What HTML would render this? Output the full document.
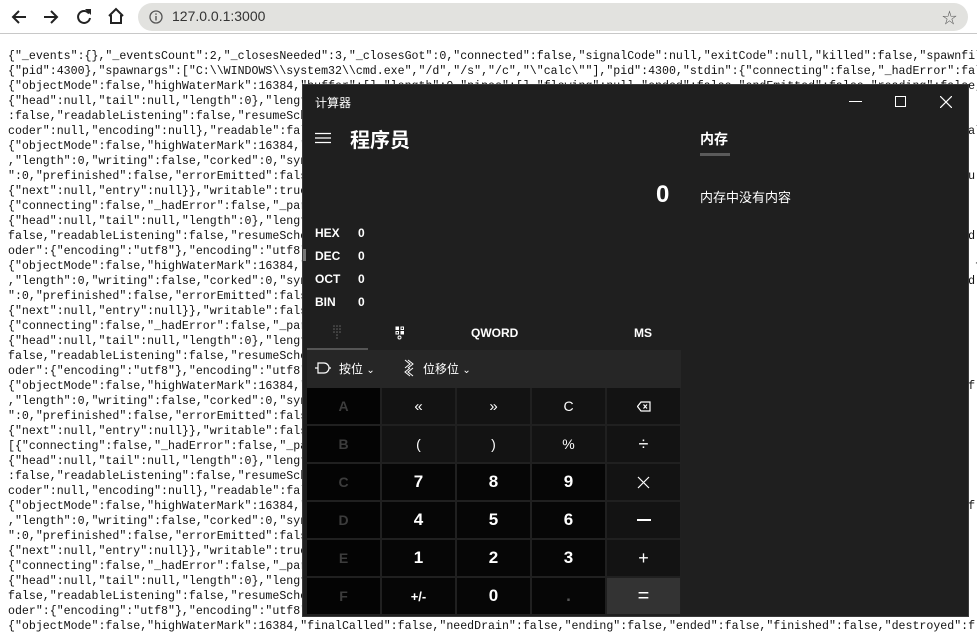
<!DOCTYPE html>
<html><head><meta charset="utf-8"><style>
*{margin:0;padding:0;box-sizing:border-box}
body{width:977px;height:625px;overflow:hidden;background:#fff;position:relative;font-family:"Liberation Sans","Noto Sans CJK SC",sans-serif}
.top{position:absolute;left:0;top:0;width:977px;height:34px;background:#fff;border-bottom:1px solid #c8c8c8}
.url{position:absolute;left:138px;top:3px;width:830px;height:28px;border-radius:14px;background:#e2e2df}
.url span{position:absolute;left:34px;top:5px;font-size:14px;color:#333}
pre{position:absolute;left:8px;top:49px;font-family:"Liberation Mono",monospace;font-size:11.6px;line-height:15px;color:#111;white-space:pre}
.win{position:absolute;left:302px;top:84px;width:667px;height:533px;background:#1f1f1f;border:1px solid #3a3a3a;color:#fff;font-family:"Liberation Sans","Noto Sans CJK SC",sans-serif}
.t{position:absolute;font-size:13px}
.grid{position:absolute;left:4px;top:303px;width:374px;height:227px;background:#202020}
.btn{position:absolute;width:73px;height:36px;display:flex;align-items:center;justify-content:center;font-size:17px;font-weight:bold}
.lt{background:#040404;color:#3c3c3c;font-size:14px}
.nm{background:#060606}
.op{background:#131313;font-weight:normal;font-size:18px}
</style></head><body>
<div class="top">
<svg style="position:absolute;left:10px;top:8px" width="18" height="18"><path d="M16 9H3M9 3L3 9L9 15" fill="none" stroke="#222" stroke-width="2"/></svg>
<svg style="position:absolute;left:42px;top:8px" width="18" height="18"><path d="M2 9H15M9 3L15 9L9 15" fill="none" stroke="#222" stroke-width="2"/></svg>
<svg style="position:absolute;left:75px;top:8px" width="18" height="18"><path d="M14 5.5A6 6 0 1 0 15 10" fill="none" stroke="#222" stroke-width="2"/><path d="M10 1H16V7Z" fill="#222"/></svg>
<svg style="position:absolute;left:107px;top:7px" width="18" height="18" viewBox="0 0 18 18"><path d="M2 9 L9 2 L16 9 M4 8 V16 H14 V8" fill="none" stroke="#222" stroke-width="2"/></svg>
<div class="url"><svg style="position:absolute;left:11px;top:7px" width="14" height="14"><circle cx="7" cy="7" r="6" fill="none" stroke="#555" stroke-width="1.3"/><rect x="6.3" y="6" width="1.4" height="4.5" fill="#555"/><rect x="6.3" y="3.4" width="1.4" height="1.4" fill="#555"/></svg><span>127.0.0.1:3000</span><span style="left:804px;top:4px;font-size:15px;color:#555">&#9734;</span></div>
</div>
<pre>{"_events":{},"_eventsCount":2,"_closesNeeded":3,"_closesGot":0,"connected":false,"signalCode":null,"exitCode":null,"killed":false,"spawnfile"
{"pid":4300},"spawnargs":["C:\\WINDOWS\\system32\\cmd.exe","/d","/s","/c","\"calc\""],"pid":4300,"stdin":{"connecting":false,"_hadError":false
{"objectMode":false,"highWaterMark":16384,"buffer":[],"length":0,"pipes":[],"flowing":null,"ended":false,"endEmitted":false,"reading":false,"sy
{"head":null,"tail":null,"length":0},"length":0,"pipes":[],"flowing":null,"ended":false,"endEmitted":false,"reading":false,"sync":true,"fe
:false,"readableListening":false,"resumeScheduled":false,"paused":true,"emitClose":false,"autoDestroy":false,"destroyed":false,"defaulcod
coder":null,"encoding":null},"readable":false,"_writableState":{"objectMode":false,"highWaterMark":16384,"finalCalled":false,"needDrain":fal
{"objectMode":false,"highWaterMark":16384,"finalCalled":false,"needDrain":false,"ending":false,"ended":false,"finished":false,"dest f
,"length":0,"writing":false,"corked":0,"sync":true,"bufferProcessing":false,"writecb":null,"writelen":0,"bufferedRequest":null,"lastBuedi
":0,"prefinished":false,"errorEmitted":false,"emitClose":false,"autoDestroy":false,"bufferedRequestCount":0,"corkedRequestsFree":{"next":nu
{"next":null,"entry":null}},"writable":true,"allowHalfOpen":false,"_sockname":null,"_pendingData":null,"_pendingEncoding":"","server":n ,
{"connecting":false,"_hadError":false,"_parent":null,"_host":null,"_readableState":{"objectMode":false,"highWaterMark":16384,"buffer":
{"head":null,"tail":null,"length":0},"length":0,"pipes":[],"flowing":null,"ended":false,"endEmitted":false,"reading":false,"sync":true,"e,
false,"readableListening":false,"resumeScheduled":false,"paused":true,"emitClose":false,"autoDestroy":false,"destroyed":false,"defaultEncod
oder":{"encoding":"utf8"},"encoding":"utf8"},"readable":true,"_writableState":{"objectMode":false,"highWaterMark":16384,"finalCalled":fa
{"objectMode":false,"highWaterMark":16384,"finalCalled":false,"needDrain":false,"ending":false,"ended":false,"finished":false,"destroyed": f
,"length":0,"writing":false,"corked":0,"sync":true,"bufferProcessing":false,"writecb":null,"writelen":0,"bufferedRequest":null,"lastBuffeed
":0,"prefinished":false,"errorEmitted":false,"emitClose":false,"autoDestroy":false,"bufferedRequestCount":0,"corkedRequestsFree":{"next":n
{"next":null,"entry":null}},"writable":false,"allowHalfOpen":false,"_sockname":null,"_pendingData":null,"_pendingEncoding":"","server":nll
{"connecting":false,"_hadError":false,"_parent":null,"_host":null,"_readableState":{"objectMode":false,"highWaterMark":16384,"buffer":
{"head":null,"tail":null,"length":0},"length":0,"pipes":[],"flowing":null,"ended":false,"endEmitted":false,"reading":false,"sync":true,"ne
false,"readableListening":false,"resumeScheduled":false,"paused":true,"emitClose":false,"autoDestroy":false,"destroyed":false,"defaultEnc
oder":{"encoding":"utf8"},"encoding":"utf8"},"readable":true,"_writableState":{"objectMode":false,"highWaterMark":16384,"finalCalled":fa
{"objectMode":false,"highWaterMark":16384,"finalCalled":false,"needDrain":false,"ending":false,"ended":false,"finished":false,"destroyed":f
,"length":0,"writing":false,"corked":0,"sync":true,"bufferProcessing":false,"writecb":null,"writelen":0,"bufferedRequest":null,"lastBuffer
":0,"prefinished":false,"errorEmitted":false,"emitClose":false,"autoDestroy":false,"bufferedRequestCount":0,"corkedRequestsFree":{"next":n
{"next":null,"entry":null}},"writable":false,"allowHalfOpen":false,"_sockname":null,"_pendingData":null,"_pendingEncoding":"","server":nul
[{"connecting":false,"_hadError":false,"_parent":null,"_host":null,"_readableState":{"objectMode":false,"highWaterMark":16384,"buffer":
{"head":null,"tail":null,"length":0},"length":0,"pipes":[],"flowing":null,"ended":false,"endEmitted":false,"reading":false,"sync":true,"ne
:false,"readableListening":false,"resumeScheduled":false,"paused":true,"emitClose":false,"autoDestroy":false,"destroyed":false,"defaultEnc
coder":null,"encoding":null},"readable":false,"_writableState":{"objectMode":false,"highWaterMark":16384,"finalCalled":false,"needDrain":f
{"objectMode":false,"highWaterMark":16384,"finalCalled":false,"needDrain":false,"ending":false,"ended":false,"finished":false,"destroyed":f
,"length":0,"writing":false,"corked":0,"sync":true,"bufferProcessing":false,"writecb":null,"writelen":0,"bufferedRequest":null,"lastBuffer
":0,"prefinished":false,"errorEmitted":false,"emitClose":false,"autoDestroy":false,"bufferedRequestCount":0,"corkedRequestsFree":{"next":n
{"next":null,"entry":null}},"writable":true,"allowHalfOpen":false,"_sockname":null,"_pendingData":null,"_pendingEncoding":"","server":null
{"connecting":false,"_hadError":false,"_parent":null,"_host":null,"_readableState":{"objectMode":false,"highWaterMark":16384,"buffer":
{"head":null,"tail":null,"length":0},"length":0,"pipes":[],"flowing":null,"ended":false,"endEmitted":false,"reading":false,"sync":true,"ne
false,"readableListening":false,"resumeScheduled":false,"paused":true,"emitClose":false,"autoDestroy":false,"destroyed":false,"defaultEnc
oder":{"encoding":"utf8"},"encoding":"utf8"},"readable":true,"_writableState":{"objectMode":false,"highWaterMark":16384,"finalCalled":fa
{"objectMode":false,"highWaterMark":16384,"finalCalled":false,"needDrain":false,"ending":false,"ended":false,"finished":false,"destroyed":f</pre>

<div class="win">
<div class="t" style="left:12px;top:9px;font-size:12px">计算器</div>
<div style="position:absolute;left:546px;top:16px;width:13px;height:1px;background:#fff"></div>
<div style="position:absolute;left:592px;top:11px;width:11px;height:11px;border:1px solid #fff"></div>
<svg style="position:absolute;left:637px;top:11px" width="12" height="12"><path d="M0 0L12 12M12 0L0 12" stroke="#fff" stroke-width="1.2"/></svg>
<svg style="position:absolute;left:12px;top:47px" width="16" height="12"><path d="M0 1.5H16M0 6H16M0 10.5H16" stroke="#fff" stroke-width="1.2"/></svg>
<div class="t" style="left:47px;top:39px;font-size:20px;font-weight:bold">程序员</div>
<div class="t" style="left:397px;top:44px;font-size:14px;font-weight:bold">内存</div>
<div style="position:absolute;left:397px;top:68px;width:30px;height:3px;background:#5a5a5a"></div>
<div class="t" style="left:397px;top:102px;font-size:13px">内存中没有内容</div>
<div class="t" style="left:353px;top:96px;font-size:24px;font-weight:bold">0</div>
<div class="t" style="left:12px;top:137px;font-size:12px;font-weight:bold;line-height:23px">HEX<br>DEC<br>OCT<br>BIN</div>
<div class="t" style="left:55px;top:137px;font-size:12px;font-weight:bold;line-height:23px">0<br>0<br>0<br>0</div>
<div style="position:absolute;left:0;top:164px;width:3px;height:12px;background:#777"></div>
<svg style="position:absolute;left:30px;top:240px" width="10" height="14"><g fill="#666"><circle cx="1" cy="1" r=".8"/><circle cx="4" cy="1" r=".8"/><circle cx="7" cy="1" r=".8"/><circle cx="1" cy="4" r=".8"/><circle cx="4" cy="4" r=".8"/><circle cx="7" cy="4" r=".8"/><circle cx="1" cy="7" r=".8"/><circle cx="4" cy="7" r=".8"/><circle cx="7" cy="7" r=".8"/><circle cx="4" cy="10" r=".8"/><circle cx="4" cy="13" r=".8"/></g></svg>
<svg style="position:absolute;left:92px;top:241px" width="10" height="14"><g fill="none" stroke="#fff" stroke-width="1"><rect x="1" y="1" width="2.5" height="2.5" fill="#fff"/><rect x="6" y="1" width="2.5" height="2.5"/><rect x="1" y="5.5" width="2.5" height="2.5"/><rect x="6" y="5.5" width="2.5" height="2.5" fill="#fff"/><circle cx="4.5" cy="11.5" r="1.5"/></g></svg>
<div class="t" style="left:168px;top:241px;font-size:12px;font-weight:bold">QWORD</div>
<div class="t" style="left:331px;top:241px;font-size:12px;font-weight:bold">MS</div>
<div style="position:absolute;left:4px;top:263px;width:61px;height:2px;background:#555"></div>
<div style="position:absolute;left:4px;top:265px;width:374px;height:38px;background:#262626"></div>
<svg style="position:absolute;left:12px;top:277px" width="16" height="12"><path d="M0 6H3M3 1H9A5 5 0 0 1 9 11H3ZM14 6H16" fill="none" stroke="#fff" stroke-width="1.2"/></svg>
<div class="t" style="left:36px;top:275px;font-size:12px">按位 <span style="font-size:10px">&#8964;</span></div>
<svg style="position:absolute;left:99px;top:274px" width="14" height="18"><path d="M3 1L8 5L3 9M6 1L11 5L6 9M11 9L6 13L11 17M8 9L3 13L8 17" fill="none" stroke="#fff" stroke-width="1"/></svg>
<div class="t" style="left:120px;top:275px;font-size:12px">位移位 <span style="font-size:10px">&#8964;</span></div>
<div class="grid">
<div class="btn lt" style="left:0;top:0">A</div><div class="btn op" style="left:75px;top:0;font-size:15px">&#171;</div><div class="btn op" style="left:150px;top:0;font-size:15px">&#187;</div><div class="btn op" style="left:225px;top:0;font-size:14px">C</div><div class="btn op" style="left:300px;top:0"><svg width="14" height="11"><path d="M4 1H13V10H4L0.5 5.5Z M6.5 3.5L10 7.5M10 3.5L6.5 7.5" fill="none" stroke="#fff" stroke-width="1.2"/></svg></div>
<div class="btn lt" style="left:0;top:38px">B</div><div class="btn op" style="left:75px;top:38px;font-size:14px">(</div><div class="btn op" style="left:150px;top:38px;font-size:14px">)</div><div class="btn op" style="left:225px;top:38px;font-size:14px">%</div><div class="btn op" style="left:300px;top:38px">&#247;</div>
<div class="btn lt" style="left:0;top:76px">C</div><div class="btn nm" style="left:75px;top:76px">7</div><div class="btn nm" style="left:150px;top:76px">8</div><div class="btn nm" style="left:225px;top:76px">9</div><div class="btn op" style="left:300px;top:76px"><svg width="13" height="13"><path d="M1 1L12 12M12 1L1 12" stroke="#fff" stroke-width="1.2"/></svg></div>
<div class="btn lt" style="left:0;top:114px">D</div><div class="btn nm" style="left:75px;top:114px">4</div><div class="btn nm" style="left:150px;top:114px">5</div><div class="btn nm" style="left:225px;top:114px">6</div><div class="btn op" style="left:300px;top:114px"><div style="width:14px;height:1.3px;background:#fff"></div></div>
<div class="btn lt" style="left:0;top:152px">E</div><div class="btn nm" style="left:75px;top:152px">1</div><div class="btn nm" style="left:150px;top:152px">2</div><div class="btn nm" style="left:225px;top:152px">3</div><div class="btn op" style="left:300px;top:152px">+</div>
<div class="btn lt" style="left:0;top:190px">F</div><div class="btn nm" style="left:75px;top:190px;font-size:13px">+/-</div><div class="btn nm" style="left:150px;top:190px">0</div><div class="btn nm" style="left:225px;top:190px;color:#555">.</div><div class="btn" style="left:300px;top:190px;background:#333;font-weight:normal;font-size:20px">=</div>
</div>
</div>
</body></html>
